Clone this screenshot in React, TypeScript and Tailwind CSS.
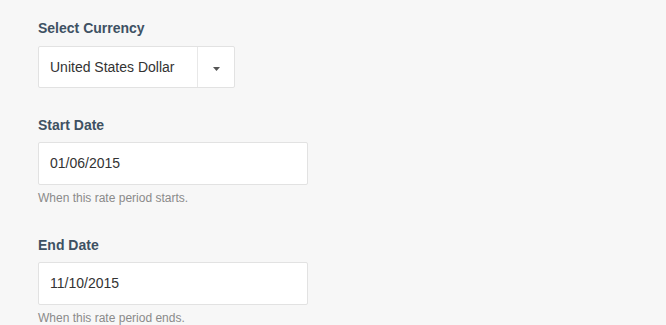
import type { ReactNode } from 'react'

// Small labelled field block used for every row of the form
function Field({ label, help, children, className = '' }: { label: string; help?: string; children: ReactNode; className?: string }) {
  return (
    <div className={className}>
      <label className="block h-5 text-[14px] font-bold leading-5 text-[#3e5163]">{label}</label>
      {children}
      {help && <p className="mt-[5px] text-[12px] leading-[17px] text-[#8a8a8a]">{help}</p>}
    </div>
  )
}

export default function App() {
  return (
    <div
      className="min-h-[325px] w-full bg-[#f7f7f7] pl-[38px] pt-[18px]"
      style={{ fontFamily: '"Liberation Sans", Arial, sans-serif' }}
    >
      <Field label="Select Currency">
        <div className="mt-[8px] flex h-[42px] w-[197px] items-stretch rounded-[2px] border border-[#e2e2e2] bg-white">
          <div className="flex flex-1 items-center pl-[11px] text-[14px] text-[#333]">United States Dollar</div>
          <div className="flex w-[37px] items-center justify-center border-l border-[#e8e8e8]">
            <svg width="7" height="4" viewBox="0 0 7 4" aria-hidden="true" className="mt-[3px] ml-[1px]">
              <path d="M0 0h7L3.5 4z" fill="#555" />
            </svg>
          </div>
        </div>
      </Field>

      <Field label="Start Date" help="When this rate period starts." className="mt-[27px]">
        <div className="mt-[7px] flex h-[43px] w-[270px] items-center rounded-[2px] border border-[#e2e2e2] bg-white pl-[11px] text-[14px] text-[#333]">
          01/06/2015
        </div>
      </Field>

      <Field label="End Date" help="When this rate period ends." className="mt-[28px]">
        <div className="mt-[7px] flex h-[43px] w-[270px] items-center rounded-[2px] border border-[#e2e2e2] bg-white pl-[11px] text-[14px] text-[#333]">
          11/10/2015
        </div>
      </Field>
    </div>
  )
}
